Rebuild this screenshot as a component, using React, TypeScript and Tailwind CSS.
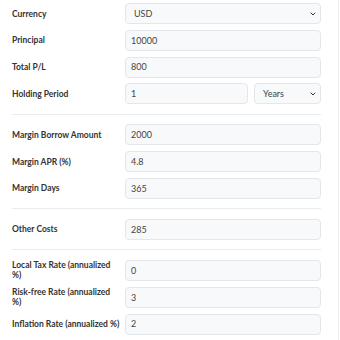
import React from 'react';
import { ChevronDown } from 'lucide-react';

const font = { fontFamily: 'Lato, "Open Sans", sans-serif' };

const Field: React.FC<{ value: string; className?: string }> = ({ value, className = '' }) => (
  <div
    className={`h-[21px] flex items-center px-[5px] bg-[#f8f9fa] border border-[#e3e6ea] rounded-[4px] text-[9px] text-[#444] ${className}`}
  >
    {value}
  </div>
);

const Select: React.FC<{ value: string; className?: string }> = ({ value, className = '' }) => (
  <div
    className={`h-[21px] flex items-center justify-between pl-[8px] pr-[3px] bg-[#f8f9fa] border border-[#e3e6ea] rounded-[4px] text-[9px] text-[#444] ${className}`}
  >
    <span>{value}</span>
    <ChevronDown size={8} strokeWidth={3} className="text-[#333]" />
  </div>
);

const Row: React.FC<{ label: React.ReactNode; children: React.ReactNode }> = ({ label, children }) => (
  <div className="flex items-center">
    <div className="w-[113px] shrink-0 whitespace-nowrap text-[8.5px] leading-[10px] font-bold text-[#333]">{label}</div>
    <div className="flex-1 flex gap-[6px]">{children}</div>
  </div>
);

const Divider = () => <div className="h-px bg-[#e9ecef] my-[9.5px]" />;

export default function App() {
  return (
    <div className="w-[340px] h-[340px] bg-white overflow-hidden" style={font}>
      <div className="w-[339px] h-full border-r border-[#eef0f2] pl-[12px] pr-[17px] pt-[3px]">
        <div className="flex flex-col gap-[5.8px]">
          <Row label="Currency"><Select value="USD" className="flex-1" /></Row>
          <Row label="Principal"><Field value="10000" className="flex-1" /></Row>
          <Row label="Total P/L"><Field value="800" className="flex-1" /></Row>
          <Row label="Holding Period">
            <Field value="1" className="w-[123px]" />
            <Select value="Years" className="flex-1" />
          </Row>
        </div>
        <Divider />
        <div className="flex flex-col gap-[5.8px]">
          <Row label="Margin Borrow Amount"><Field value="2000" className="flex-1" /></Row>
          <Row label="Margin APR (%)"><Field value="4.8" className="flex-1" /></Row>
          <Row label="Margin Days"><Field value="365" className="flex-1" /></Row>
        </div>
        <Divider />
        <div className="flex flex-col gap-[5.8px]">
          <Row label="Other Costs"><Field value="285" className="flex-1" /></Row>
        </div>
        <Divider />
        <div className="flex flex-col gap-[5.8px]">
          <Row label={<>Local Tax Rate (annualized<br />%)</>}><Field value="0" className="flex-1" /></Row>
          <Row label={<>Risk-free Rate (annualized<br />%)</>}><Field value="3" className="flex-1" /></Row>
          <Row label="Inflation Rate (annualized %)"><Field value="2" className="flex-1" /></Row>
        </div>
      </div>
    </div>
  );
}
